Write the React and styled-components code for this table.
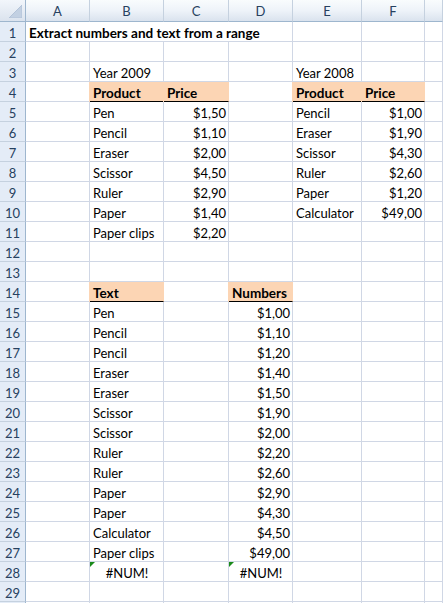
import React from "react";
import styled, { createGlobalStyle } from "styled-components";

const FILL = "#fcd5b4";
const GRID = "#d0d7e5";
const COLS = ["A", "B", "C", "D", "E", "F", "G"];

// each row: { col: { v, bold, fill, underline, align, error, span } }
const rows = {
  1: { A: { v: "Extract numbers and text from a range", bold: true, span: 4 } },
  3: { B: { v: "Year 2009" }, E: { v: "Year 2008" } },
  4: {
    B: { v: "Product", bold: true, fill: true, underline: true },
    C: { v: "Price", bold: true, fill: true, underline: true },
    E: { v: "Product", bold: true, fill: true, underline: true },
    F: { v: "Price", bold: true, fill: true, underline: true },
  },
  14: {
    B: { v: "Text", bold: true, fill: true, underline: true },
    D: { v: "Numbers", bold: true, fill: true, underline: true },
  },
  28: {
    B: { v: "#NUM!", align: "center", error: true },
    D: { v: "#NUM!", align: "center", error: true },
  },
};

const table2009 = [
  ["Pen", "$1,50"],
  ["Pencil", "$1,10"],
  ["Eraser", "$2,00"],
  ["Scissor", "$4,50"],
  ["Ruler", "$2,90"],
  ["Paper", "$1,40"],
  ["Paper clips", "$2,20"],
];
const table2008 = [
  ["Pencil", "$1,00"],
  ["Eraser", "$1,90"],
  ["Scissor", "$4,30"],
  ["Ruler", "$2,60"],
  ["Paper", "$1,20"],
  ["Calculator", "$49,00"],
];
const extracted = [
  ["Pen", "$1,00"],
  ["Pencil", "$1,10"],
  ["Pencil", "$1,20"],
  ["Eraser", "$1,40"],
  ["Eraser", "$1,50"],
  ["Scissor", "$1,90"],
  ["Scissor", "$2,00"],
  ["Ruler", "$2,20"],
  ["Ruler", "$2,60"],
  ["Paper", "$2,90"],
  ["Paper", "$4,30"],
  ["Calculator", "$4,50"],
  ["Paper clips", "$49,00"],
];

const put = (r, c, v, align) => {
  rows[r] = rows[r] || {};
  rows[r][c] = { v, align };
};
table2009.forEach(([t, p], i) => {
  put(5 + i, "B", t);
  put(5 + i, "C", p, "right");
});
table2008.forEach(([t, p], i) => {
  put(5 + i, "E", t);
  put(5 + i, "F", p, "right");
});
extracted.forEach(([t, p], i) => {
  put(15 + i, "B", t);
  put(15 + i, "D", p, "right");
});

const GlobalStyle = createGlobalStyle`
  html, body {
    margin: 0;
    padding: 0;
    background: #fff;
  }
  body {
    font-family: Lato, "Liberation Sans", sans-serif;
  }
`;

const Sheet = styled.div`
  display: grid;
  grid-template-columns: 26px 64px 74px 65px 64px 69px 63px 1fr;
  grid-template-rows: 22px;
  grid-auto-rows: 20px;
  width: 443px;
  height: 603px;
  overflow: hidden;
  font-size: 13px;
  color: #000;
`;

const Corner = styled.div`
  box-sizing: border-box;
  border-right: 1px solid #9eb6ce;
  border-bottom: 1px solid #9eb6ce;
  background: linear-gradient(#f2f6fb, #dbe3ee);
  display: flex;
  align-items: flex-end;
  justify-content: flex-end;
  padding: 0 3px 3px 0;
`;

const ColHead = styled.div`
  box-sizing: border-box;
  border-right: 1px solid #c5d1df;
  border-bottom: 1px solid #9eb6ce;
  background: linear-gradient(#f9fcfd 0%, #eef3f9 50%, #dae3ee 100%);
  color: #27415f;
  display: flex;
  align-items: center;
  justify-content: center;
  padding-top: 1px;
`;

const RowHead = styled.div`
  box-sizing: border-box;
  border-right: 1px solid #9eb6ce;
  border-bottom: 1px solid #c5d1df;
  background: #e4ecf7;
  color: #27415f;
  display: flex;
  align-items: flex-end;
  justify-content: center;
  line-height: 15px;
`;

const Cell = styled.div`
  position: relative;
  box-sizing: border-box;
  grid-column: ${(p) => (p.$span ? `span ${p.$span}` : "auto")};
  border-right: 1px solid ${(p) => (p.$fill ? FILL : GRID)};
  border-bottom: 1px solid
    ${(p) => (p.$underline ? "#000" : p.$fill ? FILL : GRID)};
  background: ${(p) => (p.$fill ? FILL : "transparent")};
  box-shadow: ${(p) => (p.$fill ? `-1px 0 0 ${FILL}` : "none")};
  font-weight: ${(p) => (p.$bold ? 700 : 400)};
  font-size: ${(p) => (p.$bold ? "13.5px" : "13px")};
  display: flex;
  align-items: flex-end;
  justify-content: ${(p) =>
    p.$align === "right"
      ? "flex-end"
      : p.$align === "center"
      ? "center"
      : "flex-start"};
  padding: 0 2px 0 3px;
  line-height: 15px;
  white-space: nowrap;

  &::before {
    content: "";
    display: ${(p) => (p.$error ? "block" : "none")};
    position: absolute;
    left: 0;
    top: 0;
    border-top: 5px solid #1a8a1a;
    border-right: 5px solid transparent;
  }
`;

const SelectAll = () => (
  <svg width="13" height="13" viewBox="0 0 13 13">
    <polygon points="0,13 13,13 13,0" fill="#c2d0e2" stroke="#b3c3d8" strokeWidth="1" />
  </svg>
);

export default function App() {
  const lines = [];
  for (let r = 1; r <= 30; r++) {
    const data = rows[r] || {};
    lines.push(<RowHead key={`h${r}`}>{r < 30 ? r : ""}</RowHead>);
    let skip = 0;
    COLS.forEach((c) => {
      if (skip > 0) {
        skip--;
        return;
      }
      const d = data[c] || {};
      if (d.span) skip = d.span - 1;
      lines.push(
        <Cell
          key={`${c}${r}`}
          $span={d.span}
          $bold={d.bold}
          $fill={d.fill}
          $underline={d.underline}
          $align={d.align}
          $error={d.error}
        >
          {d.v}
        </Cell>
      );
    });
  }

  return (
    <>
      <GlobalStyle />
      <Sheet>
        <Corner>
          <SelectAll />
        </Corner>
        {COLS.map((c) => (
          <ColHead key={c}>{c === "G" ? "" : c}</ColHead>
        ))}
        {lines}
      </Sheet>
    </>
  );
}
